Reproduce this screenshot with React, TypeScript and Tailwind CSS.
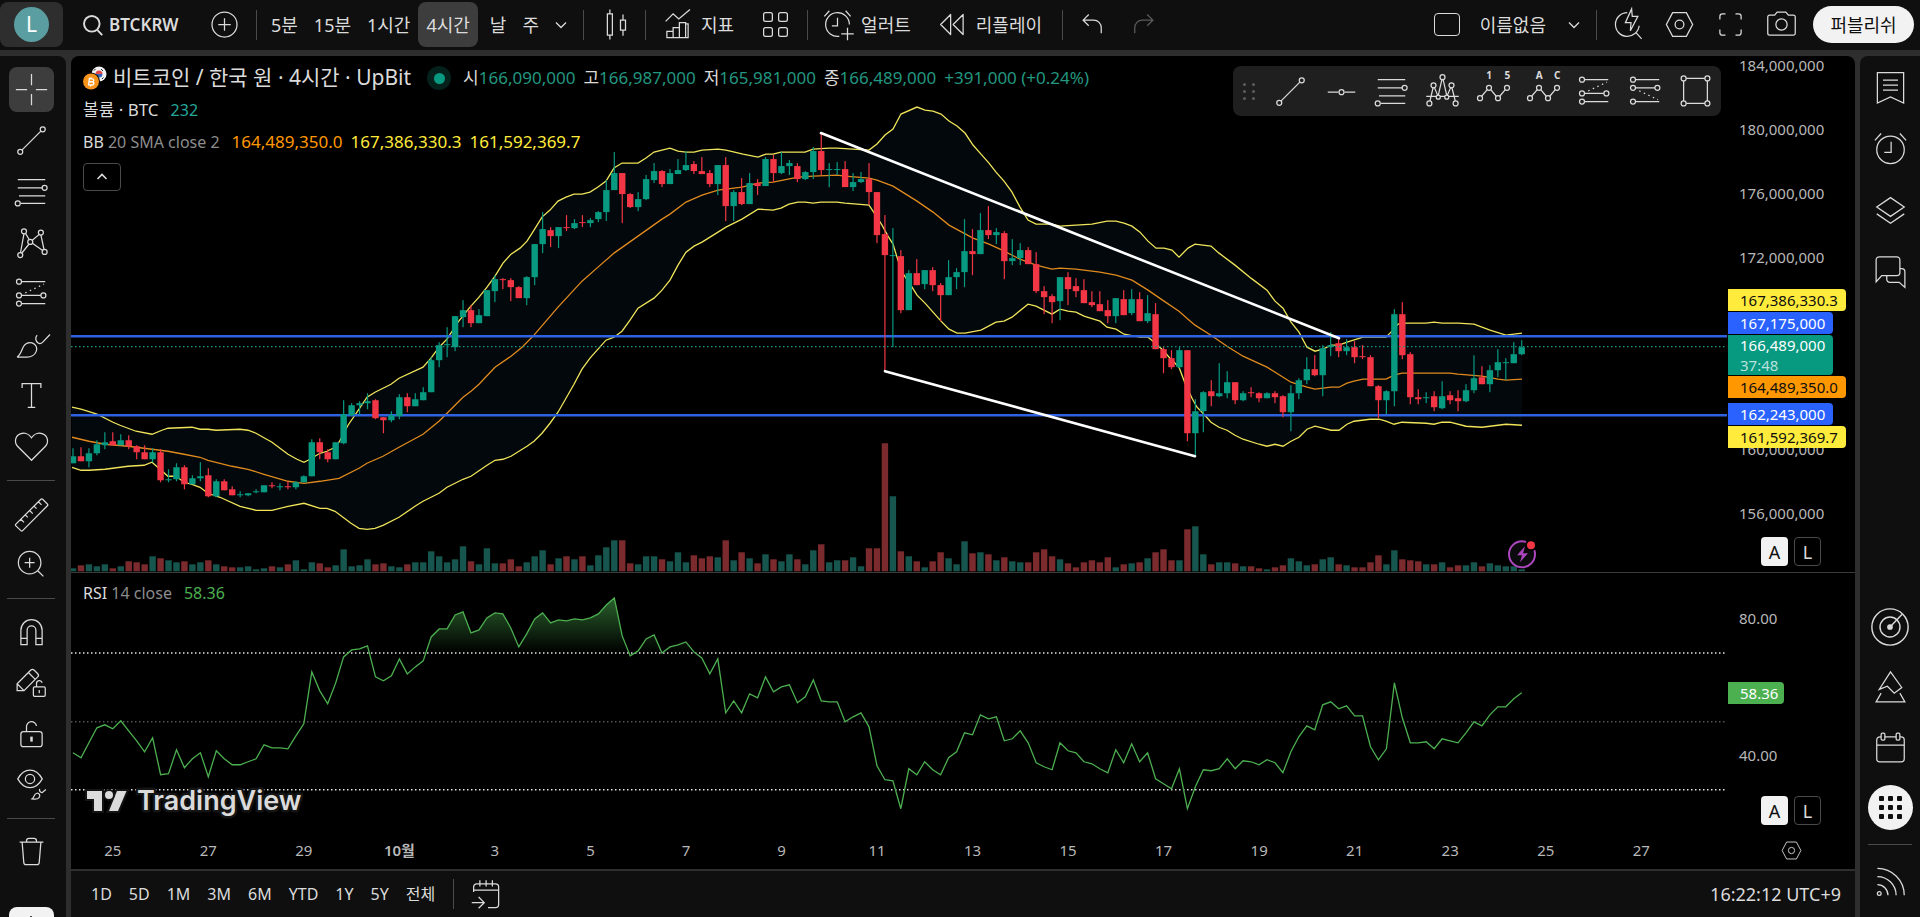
import type { ReactNode } from "react";

const STEP = 7.96;
const FIRST_X = 2;
const PLOT_W = 1656;
const PRICE_H = 516;
const RSI_H = 258;

// open, high, low, close, volume - plot units, y grows downwards
const CANDLES: number[][] = [
  [407, 392, 407, 400, 3], [400, 391, 405, 405, 6], [405, 392, 411, 397, 7], [397, 384, 399, 388, 5],
  [389, 376, 393, 386, 7], [385, 376, 389, 389, 3], [389, 378, 389, 384, 5], [384, 379, 393, 390, 10],
  [390, 389, 403, 396, 9], [396, 389, 403, 403, 7], [403, 392, 406, 396, 15], [396, 393, 426, 424, 13],
  [424, 413, 426, 423, 11], [423, 407, 425, 411, 9], [411, 409, 433, 428, 10], [428, 419, 428, 422, 7],
  [422, 406, 425, 420, 9], [419, 412, 441, 440, 11], [440, 423, 441, 425, 7], [425, 423, 434, 434, 5],
  [433, 430, 439, 439, 4], [439, 435, 441, 438, 4], [439, 437, 440, 437, 5], [436, 433, 437, 435, 2],
  [436, 429, 436, 429, 3], [429, 426, 432, 430, 5], [431, 427, 434, 430, 4], [430, 425, 433, 431, 7],
  [431, 425, 433, 426, 11], [426, 419, 426, 420, 2], [420, 383, 420, 386, 9], [386, 382, 403, 396, 8],
  [396, 393, 406, 403, 4], [403, 386, 403, 386, 6], [387, 344, 388, 358, 22], [359, 347, 360, 349, 5],
  [349, 345, 359, 347, 6], [347, 337, 353, 345, 12], [344, 343, 363, 362, 7], [361, 361, 377, 364, 8],
  [364, 355, 366, 359, 5], [360, 338, 363, 341, 4], [341, 337, 356, 350, 7], [350, 337, 350, 343, 9],
  [344, 331, 344, 336, 9], [336, 301, 336, 304, 20], [304, 286, 311, 289, 15], [289, 271, 301, 288, 9],
  [291, 260, 295, 260, 12], [261, 244, 271, 254, 25], [254, 249, 271, 267, 10], [267, 253, 267, 259, 7],
  [260, 234, 260, 234, 23], [235, 219, 246, 223, 8], [223, 222, 233, 224, 8], [224, 222, 245, 231, 12],
  [231, 230, 242, 242, 5], [242, 220, 249, 221, 9], [221, 188, 229, 188, 15], [188, 156, 197, 173, 21],
  [174, 171, 191, 180, 7], [180, 171, 192, 171, 13], [171, 159, 175, 172, 15], [172, 163, 173, 167, 12],
  [166, 159, 171, 167, 15], [167, 162, 171, 164, 6], [163, 155, 166, 156, 16], [156, 124, 165, 134, 24],
  [134, 96, 134, 117, 31], [117, 117, 167, 138, 31], [138, 137, 152, 151, 8], [151, 136, 155, 143, 7],
  [143, 119, 144, 123, 15], [124, 107, 127, 115, 15], [115, 114, 131, 128, 12], [128, 113, 128, 117, 10],
  [118, 103, 118, 114, 19], [114, 95, 115, 109, 9], [108, 105, 118, 115, 16], [115, 101, 118, 118, 13],
  [117, 114, 131, 128, 15], [128, 109, 139, 109, 14], [109, 101, 165, 150, 31], [150, 134, 165, 136, 11],
  [136, 122, 149, 148, 19], [148, 117, 148, 127, 13], [127, 123, 139, 130, 8], [130, 101, 130, 103, 17],
  [103, 99, 126, 117, 12], [117, 96, 118, 110, 10], [110, 104, 119, 107, 17], [110, 107, 126, 123, 12],
  [123, 115, 124, 116, 7], [116, 91, 123, 95, 21], [95, 77, 119, 114, 27], [114, 107, 131, 113, 9],
  [114, 106, 119, 113, 11], [113, 105, 131, 131, 11], [131, 117, 135, 126, 14], [126, 116, 127, 123, 5],
  [123, 107, 149, 136, 23], [136, 136, 187, 179, 23], [178, 159, 315, 199, 128], [200, 172, 291, 199, 75],
  [200, 194, 257, 254, 20], [254, 214, 254, 217, 15], [217, 203, 229, 229, 10], [228, 214, 233, 214, 4],
  [214, 211, 235, 229, 10], [229, 227, 265, 239, 19], [239, 204, 239, 221, 13], [221, 212, 233, 216, 7],
  [216, 163, 231, 195, 30], [195, 173, 219, 198, 18], [198, 157, 198, 174, 19], [174, 150, 183, 179, 17],
  [179, 172, 188, 176, 11], [177, 175, 223, 205, 14], [205, 183, 209, 202, 10], [202, 187, 209, 194, 9],
  [194, 191, 208, 208, 9], [208, 196, 237, 235, 19], [235, 230, 258, 241, 22], [240, 238, 267, 246, 15],
  [245, 221, 264, 221, 12], [221, 216, 249, 233, 8], [230, 222, 241, 235, 4], [234, 223, 247, 247, 9],
  [246, 235, 251, 249, 11], [248, 235, 255, 255, 9], [254, 244, 267, 260, 14], [260, 242, 267, 242, 4],
  [243, 234, 259, 259, 7], [257, 233, 259, 243, 8], [243, 236, 265, 265, 9], [265, 239, 267, 257, 13],
  [258, 247, 293, 293, 19], [293, 291, 317, 302, 22], [302, 294, 313, 311, 11], [311, 291, 312, 294, 11],
  [294, 294, 385, 377, 42], [377, 343, 400, 355, 45], [355, 335, 376, 336, 17], [335, 324, 350, 340, 7],
  [340, 307, 341, 337, 9], [337, 315, 342, 326, 9], [326, 326, 348, 344, 8], [344, 335, 345, 337, 5],
  [336, 331, 341, 337, 5], [337, 336, 346, 342, 3], [342, 336, 342, 337, 2], [337, 335, 347, 341, 4],
  [340, 339, 361, 356, 6], [356, 329, 375, 337, 13], [337, 322, 343, 324, 10], [324, 301, 328, 313, 6],
  [313, 299, 320, 319, 7], [319, 289, 340, 292, 12], [291, 276, 300, 289, 14], [287, 283, 301, 295, 7],
  [295, 283, 299, 291, 6], [291, 285, 307, 301, 4], [300, 289, 303, 301, 4], [301, 299, 330, 330, 9],
  [330, 329, 362, 344, 16], [344, 334, 358, 335, 7], [335, 253, 350, 258, 21], [258, 246, 303, 299, 12],
  [298, 296, 348, 341, 11], [341, 333, 348, 343, 10], [342, 336, 347, 341, 7], [340, 335, 355, 351, 7],
  [352, 325, 353, 340, 9], [339, 335, 348, 344, 4], [342, 334, 355, 345, 6], [345, 328, 346, 334, 6],
  [334, 299, 337, 322, 9], [321, 310, 328, 328, 5], [328, 309, 336, 314, 8], [314, 293, 321, 306, 6],
  [307, 302, 324, 306, 5], [307, 286, 307, 298, 5], [298, 284, 299, 291, 2],
];

const BB_UPPER =
  "1,351 10,353 26,358 42,366 49,369 65,375 81,378 91,374 97,372 121,371 129,373 137,373 145,374 169,373 177,374 185,377 201,386 217,398 226,403 233,406 237,404 249,397 256,395 264,391 268,386 277,369 288,353 296,341 304,336 320,328 328,322 352,311 360,302 368,291 376,283 387,266 399,251 408,241 416,231 424,220 432,207 440,198 449,192 456,185 463,174 471,161 479,154 487,145 495,141 503,138 511,138 519,136 527,131 535,125 543,112 551,107 567,107 575,102 583,96 591,94 599,92 607,95 615,96 623,96 631,94 647,93 655,94 672,98 687,101 695,98 702,98 710,96 718,96 734,96 742,93 758,92 766,92 782,93 798,94 806,88 814,79 822,73 830,58 846,51 854,54 862,55 870,58 878,65 886,70 894,77 902,89 910,98 918,107 925,116 933,125 941,136 949,151 957,164 965,168 981,168 989,170 1005,169 1021,168 1036,165 1045,165 1053,167 1061,170 1069,176 1077,185 1085,192 1093,192 1101,194 1108,201 1117,192 1124,188 1140,190 1148,197 1164,209 1180,222 1196,234 1204,245 1212,252 1220,266 1228,276 1236,291 1244,295 1252,293 1260,289 1268,289 1276,286 1292,281 1315,281 1322,274 1327,268 1336,267 1355,267 1363,266 1371,267 1387,267 1403,268 1419,274 1435,279 1443,278 1451,277";
const BB_BASIS =
  "1,381 18,385 34,388 57,390 81,393 97,395 113,398 129,401 137,404 161,410 177,413 193,418 217,425 233,427 249,425 268,422 288,412 296,407 312,400 328,391 352,378 368,365 384,349 392,341 400,335 408,328 424,311 440,300 451,291 463,279 487,251 511,225 527,211 543,197 567,180 591,163 599,158 615,146 631,139 647,134 671,131 687,127 702,126 727,121 742,120 766,119 774,120 798,122 806,124 822,130 830,135 846,145 862,156 878,169 902,182 918,188 929,193 949,203 957,206 965,209 981,213 989,212 1005,213 1029,216 1045,219 1061,224 1077,234 1093,245 1108,255 1117,263 1124,269 1140,279 1156,290 1172,300 1196,311 1220,326 1236,331 1244,333 1260,331 1268,331 1276,327 1283,325 1292,323 1315,323 1323,319 1331,317 1379,317 1387,318 1411,320 1427,323 1435,324 1451,323";
const BB_LOWER =
  "1,411 10,414 18,414 34,413 57,410 73,409 81,406 89,413 97,420 105,420 113,426 121,428 129,431 137,437 149,441 169,450 185,454 201,454 217,450 233,447 249,452 256,452 264,455 280,467 288,472 296,473 304,472 312,469 328,461 344,450 352,445 368,437 376,431 392,423 400,420 416,409 424,404 432,403 440,400 456,390 463,385 471,377 479,367 487,356 495,342 503,328 511,313 519,302 527,293 535,284 543,281 551,275 559,264 567,252 583,242 591,234 599,224 607,209 615,196 623,190 631,186 639,181 655,171 671,163 687,153 702,154 710,152 718,148 727,146 734,146 742,147 750,146 766,146 774,147 798,149 806,161 811,169 817,180 822,188 826,201 829,211 833,219 841,231 846,239 854,247 862,256 870,265 878,273 886,277 894,277 910,274 925,266 933,265 941,261 957,248 965,250 981,258 989,253 997,255 1005,256 1013,260 1029,265 1036,271 1045,273 1053,278 1069,281 1077,281 1082,285 1091,293 1099,302 1108,311 1114,327 1121,342 1126,351 1132,357 1140,366 1148,371 1156,374 1164,379 1172,383 1188,388 1196,390 1204,388 1212,390 1220,385 1228,381 1236,373 1244,370 1252,372 1260,374 1268,374 1276,368 1283,365 1299,363 1308,363 1315,365 1323,368 1331,366 1355,367 1363,368 1371,366 1379,366 1395,370 1411,371 1435,368 1451,369";

const RSI = [
  180, 185, 170, 155, 152, 156, 148, 158, 168, 179, 165, 202, 201, 177, 195, 186, 180, 204, 178, 186, 192, 192, 189, 186,
  172, 175, 175, 176, 163, 151, 99, 118, 131, 110, 84, 77, 76, 73, 104, 108, 103, 86, 101, 94, 88, 64, 56, 56, 42, 39, 60,
  57, 45, 40, 41, 55, 74, 61, 46, 40, 50, 47, 48, 46, 47, 45, 41, 32, 25, 63, 83, 78, 66, 62, 80, 74, 72, 69, 79, 85, 101,
  86, 140, 128, 140, 121, 125, 104, 119, 114, 112, 130, 124, 107, 128, 129, 129, 149, 144, 140, 154, 193, 207, 208, 236,
  196, 202, 189, 197, 202, 185, 179, 160, 162, 142, 146, 144, 168, 166, 158, 170, 190, 194, 197, 170, 178, 180, 189, 191,
  196, 200, 177, 190, 171, 189, 180, 206, 211, 216, 196, 236, 214, 197, 198, 196, 186, 196, 188, 189, 192, 187, 190, 200,
  179, 164, 153, 157, 132, 129, 136, 133, 143, 143, 174, 187, 176, 110, 145, 170, 170, 169, 176, 166, 168, 170, 160, 149,
  153, 142, 134, 134, 126, 120,
];

const xAt = (i: number) => FIRST_X + i * STEP;
const rsiPoints = RSI.map((y, i) => `${xAt(i).toFixed(1)},${y}`).join(" ");
const bandPoints = `${BB_UPPER} ${BB_LOWER.split(" ").reverse().join(" ")}`;

function Icon({ children, className = "size-[35px]", box = 28 }: { children: ReactNode; className?: string; box?: number }) {
  return (
    <svg viewBox={`0 0 ${box} ${box}`} className={`${className} shrink-0 overflow-visible`} fill="none" stroke="currentColor" aria-hidden="true">
      {children}
    </svg>
  );
}

/* ---------- icons ---------- */

const CrosshairIcon = () => (
  <Icon><path d="M14 1.500v9M14 17.500v9M1.500 14h9M17.500 14h9" /></Icon>
);
const TrendIcon = () => (
  <Icon>
    <path d="M6.500 21.500 21.500 6.500" />
    <circle cx="5" cy="23" r="2" />
    <circle cx="23" cy="5" r="2" />
  </Icon>
);
const HLineIcon = () => (
  <Icon>
    <path d="M3 14.500h8.500M16.500 14.500H25" />
    <circle cx="14" cy="14.500" r="2" />
  </Icon>
);
const FibIcon = () => (
  <Icon>
    <path d="M3 4.500h22M3 11h20M4 17.500h21M5.500 23.500H25" />
    <circle cx="24.500" cy="11" r="2" />
    <circle cx="3" cy="23.500" r="2" />
  </Icon>
);
const PatternIcon = () => (
  <Icon>
    <path d="M5.200 22.200 8 6.900M9.200 6.700l3.200 5.300M6.200 22.600l6-7.600M14.400 12.400l5.800-4.900M14.700 14.600l8.500 6M21.500 7.900l2.500 11.700" />
    <circle cx="8" cy="5" r="2" />
    <circle cx="21.500" cy="6" r="2" />
    <circle cx="13" cy="13.500" r="2" />
    <circle cx="5" cy="24" r="2" />
    <circle cx="24.500" cy="21.500" r="2" />
  </Icon>
);
const ProjectionIcon = () => (
  <Icon>
    <path d="M6 4.500h19M6 15.500h15.500M6 22h19" />
    <path d="M9 13.500 24 6.500" strokeDasharray="1.200 2.800" />
    <circle cx="4" cy="4.500" r="2" />
    <circle cx="4" cy="15.500" r="2" />
    <circle cx="23.500" cy="15.500" r="2" />
    <circle cx="4" cy="22" r="2" />
  </Icon>
);
const ProjectionDownIcon = () => (
  <Icon>
    <path d="M6 4.500h19M6 11h15.500M6 22h19" />
    <path d="M9 13.500 24 20.500" strokeDasharray="1.200 2.800" />
    <circle cx="4" cy="4.500" r="2" />
    <circle cx="4" cy="11" r="2" />
    <circle cx="23.500" cy="11" r="2" />
    <circle cx="4" cy="22" r="2" />
  </Icon>
);
const HeadShouldersIcon = () => (
  <Icon>
    <path d="M4 21.500 6.500 10.800M7.500 10.700l2.700 6.600M10.700 16.700 13.500 4.500M14.500 4.500l2.800 12.200M17.800 17.200l2.800-6.500M21.500 10.800 24.200 21.500M1 17.800h8.500M12 17.800h4M18.500 17.800H27" />
    <circle cx="3.500" cy="23.500" r="2" />
    <circle cx="6.800" cy="9" r="2" />
    <circle cx="14" cy="2.500" r="2" />
    <circle cx="21.200" cy="9" r="2" />
    <circle cx="24.500" cy="23.500" r="2" />
    <circle cx="10.600" cy="18.500" r="1.600" />
    <circle cx="17.400" cy="18.500" r="1.600" />
  </Icon>
);
const WaveIcon = ({ from, to }: { from: string; to: string }) => (
  <Icon>
    <path d="M4.500 17.800 9 12.500M11.800 12.500l4.400 5.300M19 17.800l4.400-5.300" />
    <circle cx="3.200" cy="19.300" r="2" />
    <circle cx="10.400" cy="11" r="2" />
    <circle cx="17.600" cy="19.300" r="2" />
    <circle cx="24.800" cy="11" r="2" />
    <g fill="currentColor" stroke="none" fontSize="8" fontWeight="700" textAnchor="middle">
      <text x="10.500" y="4">{from}</text>
      <text x="25" y="4">{to}</text>
    </g>
  </Icon>
);
const RectIcon = () => (
  <Icon>
    <path d="M6.500 3.500h15M6.500 23.500h15M4.500 5.500v16M23.500 5.500v16" />
    <circle cx="4.500" cy="3.500" r="2" />
    <circle cx="23.500" cy="3.500" r="2" />
    <circle cx="4.500" cy="23.500" r="2" />
    <circle cx="23.500" cy="23.500" r="2" />
  </Icon>
);
const BrushIcon = () => (
  <Icon>
    <path d="M2.500 24c3-1.500 3.500-6 5.500-9 1.500-2.200 4-3 6.500-2.300 3 1 4.500 4 3.200 7-1.200 2.800-4 4.300-7.200 4.300z" />
    <path d="M18.500 6.500c-1.800 2-1.300 5 .8 6.300 1.200.8 2.500.5 3.500-.5l6-6.300" />
  </Icon>
);
const TextIcon = () => (
  <Icon><path d="M6.500 8V4.500h15V8M14 4.500v19M11 23.500h6" /></Icon>
);
const HeartIcon = () => (
  <Icon>
    <path d="M14 25 3 14C-.2 10.700 1 5.500 5 3.900 8.500 2.500 12 4 14 7c2-3 5.500-4.500 9-3.100 4 1.600 5.200 6.800 2 10.100z" />
  </Icon>
);
const RulerIcon = () => (
  <Icon>
    <path d="M1.500 22.500 21.500 2.600a1 1 0 0 1 1.400 0l3.800 3.800a1 1 0 0 1 0 1.400L6.900 27.700a1 1 0 0 1-1.400 0l-4-3.800a1 1 0 0 1 0-1.400zM5.500 18.600l2.500 2.500M9 15.100l2 2M12.500 11.600l2.500 2.500M16 8.100l2 2M19.500 4.600l2.500 2.500" />
  </Icon>
);
const ZoomInIcon = () => (
  <Icon><path d="M12.500 3.500a9 9 0 1 0 0 18 9 9 0 0 0 0-18zM12.500 8.500v8M8.500 12.500h8M19 19l4.500 4.500" /></Icon>
);
const MagnetIcon = () => (
  <Icon>
    <path d="M5.500 24.500V13a8.500 8.500 0 0 1 17 0v11.500h-5V13a3.500 3.500 0 0 0-7 0v11.500zM5.500 19.500h5M17.500 19.500h5" />
  </Icon>
);
const PencilLockIcon = () => (
  <Icon>
    <path d="M13.500 4 2.500 15v5.500H8l11-11c.8-.8.8-1.700 0-2.500L16 4c-.8-.8-1.700-.8-2.500 0zM11.500 6l5.500 5.500M2.500 15 8 20.500" />
    <rect x="15.500" y="17.500" width="9.500" height="7.500" rx="1" />
    <path d="M18 17.500v-2.500a2.300 2.300 0 0 1 4.500-.8M20.200 20v2.500" />
  </Icon>
);
const LockIcon = () => (
  <Icon>
    <rect x="5.500" y="12.500" width="17" height="12" rx="2" />
    <path d="M10 12.500V9a4 4 0 0 1 8-1" />
    <path d="M14 16.500v4" strokeWidth="2" />
  </Icon>
);
const EyeIcon = () => (
  <Icon>
    <path d="M3 9.500C5.500 5 9 2.500 12.800 2.500s7.300 2.500 9.800 7c-2.500 4.500-6 7-9.800 7s-7.300-2.500-9.800-7z" />
    <circle cx="12.800" cy="9.500" r="3.700" />
    <path d="M14.500 25.500c1.500-1 1.500-4 3.800-4.500 2-.2 3 2 1.800 3.500-1 1.200-2.800 1.500-5.600 1zM20.500 17.500c-.5 1.500.5 3 2 3l3-2.500" />
  </Icon>
);
const TrashIcon = () => (
  <Icon>
    <path d="M4.500 6.500h19M10 6.500v-1a2 2 0 0 1 2-2h4a2 2 0 0 1 2 2v1M6.500 6.500l1.300 16a2 2 0 0 0 2 2h8.400a2 2 0 0 0 2-2l1.300-16" />
  </Icon>
);
const SearchIcon = () => (
  <Icon className="size-6" box={20}><g strokeWidth="1.600"><circle cx="9" cy="9" r="6.500" /><path d="m13.700 14.200 4 4.300" /></g></Icon>
);
const PlusCircleIcon = () => (
  <Icon><circle cx="14" cy="14" r="10" /><path d="M14 9v10M9 14h10" /></Icon>
);
const ChevronIcon = () => (
  <Icon className="size-4" box={16}><path d="m3 5.500 5 5 5-5" strokeWidth="1.300" /></Icon>
);
const CandlesIcon = () => (
  <Icon><path d="M7.500 5.500h4v17h-4zM9.500 2v3.500M9.500 22.500V26M18 10.500h4v8h-4zM20 6v4.500M20 18.500V23" /></Icon>
);
const IndicatorsIcon = () => (
  <Icon>
    <path d="m4.500 11.500 6-6 4.500 4L24 2M5.500 24.500v-5h5v5M10.500 24.500v-8h5v8M15.500 18.500v-2M15.500 24.500v-12h5v12M5 24.500h17.500v-11h-2" />
  </Icon>
);
const LayoutIcon = () => (
  <Icon>
    <rect x="4.500" y="4.500" width="7" height="7" rx="1.500" />
    <rect x="16.500" y="4.500" width="7" height="7" rx="1.500" />
    <rect x="4.500" y="16.500" width="7" height="7" rx="1.500" />
    <rect x="16.500" y="16.500" width="7" height="7" rx="1.500" />
  </Icon>
);
const AlertAddIcon = () => (
  <Icon>
    <path d="M23.500 14a9.500 9.500 0 1 0-8 9.400M14 8.500v6.500h-4.500M3.500 7.500l4-4.500M20.500 3l4 4.500M22 16.500v10M17 21.500h10" />
  </Icon>
);
const RewindIcon = () => (
  <Icon><path d="M12.500 6v16l-8-8zM22.500 6v16l-8-8z" strokeLinejoin="round" /></Icon>
);
const UndoIcon = () => (
  <Icon><path d="m11 6-4.500 4.500L11 15M6.500 10.500H15a6 6 0 0 1 6 6V21" /></Icon>
);
const RedoIcon = () => (
  <Icon><path d="m17 6 4.500 4.500L17 15M21.500 10.500H13a6 6 0 0 0-6 6V21" /></Icon>
);
const QuickSearchIcon = () => (
  <Icon>
    <path d="M13 4.500A9.500 9.500 0 1 0 22.500 15M20 20.500l4.500 5M16.500 1.500l-5 11h4.500l-.5 6.500 6-11.500H17z" />
  </Icon>
);
const HexIcon = ({ className }: { className?: string }) => (
  <Icon className={className}>
    <path d="m8.500 4.500-5 9.500 5 9.500h11l5-9.500-5-9.500z" />
    <circle cx="14" cy="14" r="3.500" />
  </Icon>
);
const FullscreenIcon = () => (
  <Icon>
    <path d="M10 5.500H7.500a2 2 0 0 0-2 2V10M18 5.500h2.500a2 2 0 0 1 2 2V10M10 22.500H7.500a2 2 0 0 1-2-2V18M18 22.500h2.500a2 2 0 0 0 2-2V18" />
  </Icon>
);
const CameraIcon = () => (
  <Icon>
    <path d="M4.500 6.500h4l2-2.500h7l2 2.500h4a1.500 1.500 0 0 1 1.500 1.500v13a1.500 1.500 0 0 1-1.500 1.500h-19A1.500 1.500 0 0 1 3 21V8a1.500 1.500 0 0 1 1.500-1.500z" />
    <circle cx="14" cy="14" r="4.500" />
  </Icon>
);
const WatchlistIcon = () => (
  <Icon><path d="M3.500 2h21v24.500L14 21.500 3.500 26.500zM8 8h12M8 12h12M8 16h12" /></Icon>
);
const AlarmIcon = () => (
  <Icon><circle cx="14" cy="15" r="11" /><path d="M14.500 8.500v8.500H9M1.500 7.500 6.500 2M21.500 2l5 5.500" /></Icon>
);
const LayersIcon = () => (
  <Icon><path d="M14 4.500 25 12l-11 7.500L3 12zM3 17.500 14 25l11-7.500" /></Icon>
);
const ChatIcon = () => (
  <Icon>
    <path d="M5 3h14A2.500 2.500 0 0 1 21.500 5.500v10a2.500 2.500 0 0 1-2.500 2.500H7L2.500 23V5.500A2.500 2.500 0 0 1 5 3z" />
    <path d="M21.500 12.500H23a2.500 2.500 0 0 1 2.500 2.500v12.500l-4.500-4h-7.500a2.500 2.500 0 0 1-2.500-2.500v-3" />
  </Icon>
);
const RadarIcon = () => (
  <Icon className="size-[40px]">
    <circle cx="14" cy="14" r="12.700" />
    <circle cx="14" cy="14" r="7" />
    <circle cx="14" cy="14" r="1.500" fill="currentColor" />
    <path d="m14 14 8.500-9" />
  </Icon>
);
const PineIcon = () => (
  <Icon>
    <path d="M14 1.500 5 15.500l6.500-2.500 5.500 5.500 6-4.500zM6.500 18.500 2.500 25.500h23l-4-7" />
  </Icon>
);
const CalendarIcon = () => (
  <Icon>
    <path d="M6.500 5.500h-1a2.500 2.500 0 0 0-2.500 2.500v15A2.500 2.500 0 0 0 5.500 25.500h17A2.500 2.500 0 0 0 25 23V8a2.500 2.500 0 0 0-2.500-2.500h-1M9.500 5.500h9M3 12h22" />
    <rect x="6.500" y="2.500" width="3" height="5.500" rx="1" />
    <rect x="18.500" y="2.500" width="3" height="5.500" rx="1" />
  </Icon>
);
const FeedIcon = () => (
  <Icon>
    <circle cx="5" cy="23.500" r="1.500" />
    <path d="M3.500 16.500a8.500 8.500 0 0 1 8.500 8.500M3.500 10a15 15 0 0 1 15 15M3.500 3.500A21.500 21.500 0 0 1 25 25" />
  </Icon>
);
const GoToDateIcon = () => (
  <Icon>
    <path d="M4.500 12V8A2.500 2.500 0 0 1 7 5.500h15A2.500 2.500 0 0 1 24.500 8v14a2.500 2.500 0 0 1-2.500 2.500h-6M4.500 10.500h20M9.500 2.500v5M14.500 2.500v5M19.500 2.500v5M3 20.500h9.500M8.500 16l4.500 4.500L8.500 25" />
  </Icon>
);

/* ---------- building blocks ---------- */

function ToolButton({ label, active, children }: { label: string; active?: boolean; children: ReactNode }) {
  return (
    <button type="button" aria-label={label} className="flex h-[51px] w-full shrink-0 items-center justify-center">
      <span className={`flex h-[45px] w-[45px] items-center justify-center rounded-lg ${active ? "bg-[#3d3d3d]" : ""}`}>{children}</span>
    </button>
  );
}

function ToolDivider() {
  return (
    <div className="flex h-4 shrink-0 items-center justify-center">
      <div className="h-px w-12 bg-[#4a4a4a]" />
    </div>
  );
}

function BarDivider({ className = "" }: { className?: string }) {
  return <div className={`h-[30px] w-px shrink-0 bg-[#4a4a4a] ${className}`} />;
}

function IntervalButton({ label, active, className = "" }: { label: string; active?: boolean; className?: string }) {
  return (
    <button type="button" className={`h-[45px] rounded-lg px-2 text-lg ${active ? "bg-[#3d3d3d]" : ""} ${className}`}>
      {label}
    </button>
  );
}

function Header() {
  return (
    <header className="flex h-[50px] shrink-0 items-center bg-[#0f0f0f] pb-px pr-1.5">
      <button type="button" aria-label="메뉴" className="flex h-[45px] w-[63px] items-center justify-center rounded-lg bg-[#2e2e2e]">
        <span className="flex size-[35px] items-center justify-center rounded-full bg-[#5b9ea1] text-[21px] text-white">L</span>
      </button>
      <button type="button" className="ml-[18px] flex w-[110px] items-center gap-1 text-[17px] font-semibold">
        <SearchIcon />
        BTCKRW
      </button>
      <button type="button" aria-label="심볼 비교" className="ml-4"><PlusCircleIcon /></button>
      <BarDivider className="ml-3.5 mr-1.5" />
      <IntervalButton label="5분" />
      <IntervalButton label="15분" />
      <IntervalButton label="1시간" />
      <IntervalButton label="4시간" active />
      <IntervalButton label="날" className="ml-1" />
      <IntervalButton label="주" />
      <button type="button" aria-label="차트 간격" className="ml-1.5"><ChevronIcon /></button>
      <BarDivider className="ml-3.5" />
      <button type="button" aria-label="캔들" className="ml-3.5"><CandlesIcon /></button>
      <BarDivider className="ml-3" />
      <button type="button" className="ml-3.5 flex items-center gap-1.5 text-lg"><IndicatorsIcon />지표</button>
      <button type="button" aria-label="레이아웃 템플릿" className="ml-6"><LayoutIcon /></button>
      <BarDivider className="ml-3.5" />
      <button type="button" className="ml-3 flex items-center gap-1.5 text-lg"><AlertAddIcon />얼러트</button>
      <button type="button" className="ml-6 flex items-center gap-1.5 text-lg"><RewindIcon />리플레이</button>
      <BarDivider className="ml-5" />
      <button type="button" aria-label="되돌리기" className="ml-3"><UndoIcon /></button>
      <button type="button" aria-label="다시 실행" className="ml-4 text-[#5c5c5c]"><RedoIcon /></button>

      <div className="ml-auto flex items-center">
        <button type="button" className="flex items-center gap-5 text-lg">
          <span className="h-[23px] w-[26px] rounded border border-[#dbdbdb]" />
          이름없음
          <ChevronIcon />
        </button>
        <BarDivider className="ml-3.5" />
        <div className="ml-3.5 flex items-center gap-4">
          <button type="button" aria-label="빠른 검색"><QuickSearchIcon /></button>
          <button type="button" aria-label="설정"><HexIcon /></button>
          <button type="button" aria-label="전체화면"><FullscreenIcon /></button>
          <button type="button" aria-label="스냅샷"><CameraIcon /></button>
        </div>
        <button type="button" className="ml-3.5 h-[37px] w-[101px] rounded-full bg-[#f2f2f2] text-lg leading-none text-[#0f0f0f]">퍼블리쉬</button>
      </div>
    </header>
  );
}

function DrawingToolbar() {
  return (
    <aside className="flex w-[66px] shrink-0 flex-col overflow-hidden rounded-tr-lg bg-[#0f0f0f] pr-1 pt-2">
      <ToolButton label="크로스" active><CrosshairIcon /></ToolButton>
      <ToolButton label="추세선"><TrendIcon /></ToolButton>
      <ToolButton label="피보나치"><FibIcon /></ToolButton>
      <ToolButton label="패턴"><PatternIcon /></ToolButton>
      <ToolButton label="예측"><ProjectionIcon /></ToolButton>
      <ToolButton label="브러쉬"><BrushIcon /></ToolButton>
      <ToolButton label="텍스트"><TextIcon /></ToolButton>
      <ToolButton label="아이콘"><HeartIcon /></ToolButton>
      <ToolDivider />
      <ToolButton label="측정"><RulerIcon /></ToolButton>
      <ToolButton label="확대"><ZoomInIcon /></ToolButton>
      <ToolDivider />
      <ToolButton label="자석"><MagnetIcon /></ToolButton>
      <ToolButton label="그리기 모드 유지"><PencilLockIcon /></ToolButton>
      <ToolButton label="드로잉 잠금"><LockIcon /></ToolButton>
      <ToolButton label="드로잉 숨기기"><EyeIcon /></ToolButton>
      <ToolDivider />
      <ToolButton label="삭제"><TrashIcon /></ToolButton>
      <button type="button" aria-label="추가" className="mx-auto mt-[30px] flex h-[45px] w-[45px] shrink-0 items-start justify-center rounded-lg bg-[#f2f2f2] pt-2 text-[#0f0f0f]">
        <Icon className="size-5" box={20}><path d="M10 1v18M1 10h18" strokeWidth="1.500" /></Icon>
      </button>
    </aside>
  );
}

function SideButton({ label, tall, children }: { label: string; tall?: boolean; children: ReactNode }) {
  return (
    <button type="button" aria-label={label} className={`flex w-full items-center justify-center ${tall ? "h-[61px]" : "h-[60px]"}`}>
      {children}
    </button>
  );
}

function WidgetBar() {
  return (
    <aside className="flex w-[60px] shrink-0 flex-col rounded-tl-lg bg-[#0f0f0f] pb-1.5 pt-px">
      <SideButton label="왓치리스트" tall><WatchlistIcon /></SideButton>
      <SideButton label="얼러트" tall><AlarmIcon /></SideButton>
      <SideButton label="오브젝트 트리" tall><LayersIcon /></SideButton>
      <SideButton label="채팅" tall><ChatIcon /></SideButton>
      <div className="mt-auto">
        <SideButton label="스크리너"><RadarIcon /></SideButton>
        <SideButton label="파인 에디터"><PineIcon /></SideButton>
        <SideButton label="캘린더"><CalendarIcon /></SideButton>
        <SideButton label="프로덕트">
          <span className="flex size-[45px] items-center justify-center rounded-full bg-[#f2f2f2]">
            <span className="grid grid-cols-3 gap-1">
              {Array.from({ length: 9 }, (_, i) => (
                <span key={i} className="size-[5px] rounded-[1px] bg-[#0f0f0f]" />
              ))}
            </span>
          </span>
        </SideButton>
        <div className="flex h-3.5 items-center justify-center">
          <div className="h-px w-11 bg-[#4a4a4a]" />
        </div>
        <SideButton label="피드"><FeedIcon /></SideButton>
      </div>
    </aside>
  );
}

function FavoritesBar() {
  return (
    <div className="absolute right-1.5 top-2.5 flex h-[50px] w-[488px] items-center rounded-lg bg-[#1f1f1f]">
      <div className="flex w-8 justify-center">
        <div className="grid grid-cols-2 gap-x-1.5 gap-y-1">
          {Array.from({ length: 6 }, (_, i) => (
            <span key={i} className="size-[3px] rounded-full bg-[#5c5c5c]" />
          ))}
        </div>
      </div>
      {[
        { label: "추세선", icon: <TrendIcon /> },
        { label: "가로줄", icon: <HLineIcon /> },
        { label: "되돌림", icon: <FibIcon /> },
        { label: "헤드앤숄더", icon: <HeadShouldersIcon /> },
        { label: "임펄스", icon: <WaveIcon from="1" to="5" /> },
        { label: "코렉션", icon: <WaveIcon from="A" to="C" /> },
        { label: "롱 포지션", icon: <ProjectionIcon /> },
        { label: "숏 포지션", icon: <ProjectionDownIcon /> },
        { label: "직사각형", icon: <RectIcon /> },
      ].map(({ label, icon }) => (
        <button key={label} type="button" aria-label={label} className="flex flex-1 justify-center">{icon}</button>
      ))}
    </div>
  );
}

function Ohlc({ label, value }: { label: string; value: string }) {
  return (
    <span className="text-[17px]">
      {label}
      <span className="text-[#22967f]">{value}</span>
    </span>
  );
}

function Legend() {
  return (
    <div className="absolute left-3 top-1.5">
      <div className="flex h-8 items-center gap-2 whitespace-nowrap">
        <div className="mr-2 flex items-center gap-1.5">
          <svg viewBox="0 0 24 24" className="size-6" aria-hidden="true">
            <circle cx="16" cy="8" r="7.500" fill="#f2f2f2" />
            <path d="M12.500 8a3.500 3.500 0 0 1 7 0z" fill="#e04a4a" />
            <path d="M12.500 8a3.500 3.500 0 0 0 7 0z" fill="#3465b8" />
            <path d="m18 3 2 2M20.500 11.500 19 13M11 4.500 12.500 3" stroke="#222" />
            <circle cx="8" cy="15.500" r="9" fill="#000" />
            <circle cx="8" cy="15.500" r="8" fill="#f7931a" />
            <path d="M6.500 11.500 5.500 19.500M6 12.500l3.200.4c2.200.4 1.900 3-.3 2.900l-2.700-.3 3 .3c2.500.4 2.100 3.500-.6 3.200l-3.300-.4M8.300 11.400l-.2 1.300M7.500 19l-.2 1.400" fill="none" stroke="#fff" strokeWidth="1.300" />
          </svg>
          <h1 className="text-[21px]">비트코인 / 한국 원 · 4시간 · UpBit</h1>
        </div>
        <span className="mr-1 flex size-6 items-center justify-center rounded-full bg-[#04211c]">
          <span className="size-[11px] rounded-full bg-[#089981]" />
        </span>
        <Ohlc label="시" value="166,090,000" />
        <Ohlc label="고" value="166,987,000" />
        <Ohlc label="저" value="165,981,000" />
        <Ohlc label="종" value="166,489,000" />
        <span className="text-[17px] text-[#22967f]">+391,000 (+0.24%)</span>
      </div>
      <div className="flex h-8 items-center gap-3 text-base">
        <span className="text-[17px]">볼륨 · BTC</span>
        <span className="text-[#26a69a]">232</span>
      </div>
      <div className="flex h-8 items-center gap-2 text-[17px]">
        <span className="mr-1 text-base">BB <span className="text-[#8c8c8c]">20 SMA close 2</span></span>
        <span className="text-[#ff9800]">164,489,350.0</span>
        <span className="text-[#ffeb3b]">167,386,330.3</span>
        <span className="text-[#ffeb3b]">161,592,369.7</span>
      </div>
      <button type="button" aria-label="지표 접기" className="mt-[5px] flex h-7 w-[38px] items-center justify-center rounded border border-[#4a4a4a]">
        <Icon className="size-4" box={16}><path d="m3.500 10 4.500-4.500 4.500 4.500" strokeWidth="1.600" /></Icon>
      </button>
    </div>
  );
}

function PricePlot() {
  return (
    <svg viewBox={`0 0 ${PLOT_W} ${PRICE_H}`} preserveAspectRatio="none" className="absolute inset-0 size-full" role="img" aria-label="BTCKRW 4시간 차트">
      <polygon points={bandPoints} fill="#2196f3" fillOpacity="0.05" />
      {CANDLES.map(([open, , , close, volume], i) => (
        <rect key={i} x={xAt(i) - 3.2} y={515 - volume} width="6.400" height={volume} fill={close > open ? "#7b2b2d" : "#17564e"} />
      ))}
      <g fill="none" strokeWidth="1.300">
        <polyline points={BB_UPPER} stroke="#efe45a" />
        <polyline points={BB_LOWER} stroke="#efe45a" />
        <polyline points={BB_BASIS} stroke="#e08a1e" />
      </g>
      <g stroke="#2f62e0" strokeWidth="2.500">
        <line x1="0" x2={PLOT_W} y1="280" y2="280" />
        <line x1="0" x2={PLOT_W} y1="359" y2="359" />
      </g>
      {CANDLES.map(([open, high, low, close], i) => {
        const color = close > open ? "#f23645" : "#089981";
        const x = xAt(i);
        return (
          <g key={i} fill={color}>
            <rect x={x - 0.6} y={high} width="1.200" height={Math.max(low - high, 1)} />
            <rect x={x - 3.2} y={Math.min(open, close)} width="6.400" height={Math.max(Math.abs(close - open), 1)} />
          </g>
        );
      })}
      <line x1="0" x2={PLOT_W} y1="290.500" y2="290.500" stroke="#149a84" strokeWidth="1.300" strokeDasharray="1.500 2.500" />
      <g stroke="#fff" strokeWidth="2.600" strokeLinecap="round">
        <line x1="750" y1="77" x2="1268" y2="282" />
        <line x1="814" y1="315" x2="1124" y2="400" />
      </g>
      <circle cx="1451" cy="498" r="13" fill="#0b0b0d" stroke="#ab47bc" strokeWidth="2" />
      <path d="m1454 490-8 9h5l-2 7 8-9h-5z" fill="#ab47bc" />
      <circle cx="1460" cy="489" r="6" fill="#000" />
      <circle cx="1460" cy="489" r="4" fill="#f23645" />
    </svg>
  );
}

function RsiPlot() {
  return (
    <svg viewBox={`0 0 ${PLOT_W} ${RSI_H}`} preserveAspectRatio="none" className="absolute inset-0 size-full" role="img" aria-label="RSI 14">
      <defs>
        <linearGradient id="overbought" x1="0" x2="0" y1="20" y2="80" gradientUnits="userSpaceOnUse">
          <stop offset="0" stopColor="#4caf50" stopOpacity="0.600" />
          <stop offset="1" stopColor="#4caf50" stopOpacity="0" />
        </linearGradient>
        <clipPath id="above-band">
          <rect x="0" y="0" width={PLOT_W} height="80" />
        </clipPath>
      </defs>
      <polygon points={`${xAt(0)},${RSI_H} ${rsiPoints} ${xAt(182)},${RSI_H}`} fill="url(#overbought)" clipPath="url(#above-band)" />
      <g strokeDasharray="1.500 2.500" strokeWidth="1.500">
        <line x1="0" x2={PLOT_W} y1="80" y2="80" stroke="#e6e6e6" />
        <line x1="0" x2={PLOT_W} y1="149" y2="149" stroke="#555" />
        <line x1="0" x2={PLOT_W} y1="217" y2="217" stroke="#e6e6e6" />
      </g>
      <polyline points={rsiPoints} fill="none" stroke="#4caf50" strokeWidth="1.300" />
    </svg>
  );
}

const PRICE_TICKS = ["184,000,000", "180,000,000", "176,000,000", "172,000,000", "", "", "160,000,000", "156,000,000"];

function ScaleModes() {
  return (
    <div className="absolute bottom-1.5 left-[34px] flex gap-1.5 text-lg leading-none">
      <button type="button" aria-label="자동 스케일" className="h-[29px] w-[27px] rounded bg-[#f2f2f2] text-[#0f0f0f]">A</button>
      <button type="button" aria-label="로그 스케일" className="h-[29px] w-[27px] rounded border border-[#4a4a4a]">L</button>
    </div>
  );
}

function PriceAxis() {
  return (
    <div className="relative flex w-32 shrink-0 flex-col overflow-hidden text-[15px] leading-[22px]">
      <div className="-mt-[23px] mb-[27px] flex flex-1 flex-col text-[#b8b8b8]">
        {PRICE_TICKS.map((tick, i) => (
          <div key={i} className="flex flex-1 items-center pl-3">{tick}</div>
        ))}
      </div>
      <div className="absolute left-px top-[233px] flex flex-col items-start gap-px text-white">
        <span className="rounded-r-sm bg-[#ffeb3b] pl-3 pr-2 text-[#0f0f0f]">167,386,330.3</span>
        <span className="rounded-r-sm bg-[#2962ff] pl-3 pr-2">167,175,000</span>
        <span className="flex flex-col rounded-r-sm bg-[#089981] pl-3 pr-2 leading-5">
          166,489,000
          <span className="leading-5 text-[#b9e0d9]">37:48</span>
        </span>
        <span className="rounded-r-sm bg-[#ff9800] pl-3 pr-2 text-[#0f0f0f]">164,489,350.0</span>
        <span className="mt-1 rounded-r-sm bg-[#2962ff] pl-3 pr-2">162,243,000</span>
        <span className="rounded-r-sm bg-[#ffeb3b] pl-3 pr-2 text-[#0f0f0f]">161,592,369.7</span>
      </div>
      <ScaleModes />
    </div>
  );
}

function RsiAxis() {
  return (
    <div className="relative flex w-32 shrink-0 flex-col overflow-hidden text-[15px] leading-[22px]">
      <div className="-mt-6 mb-2 flex flex-1 flex-col text-[#b8b8b8]">
        <div className="flex flex-1 items-center pl-3">80.00</div>
        <div className="flex flex-1 items-center pl-3">40.00</div>
      </div>
      <span className="absolute left-px top-[109px] rounded-r-sm bg-[#4caf50] pl-3 pr-1.5 text-white">58.36</span>
      <ScaleModes />
    </div>
  );
}

function Watermark() {
  return (
    <a href="#tradingview" aria-label="TradingView" className="absolute bottom-3 left-4 flex items-center gap-2.5 text-[#dbdbdb]">
      <svg viewBox="0 0 40 20" className="h-5 w-10 overflow-visible" fill="currentColor" stroke="#141414" strokeWidth="4" paintOrder="stroke" aria-hidden="true">
        <path d="M0 0h15v20H7V8H0zM30 0h9.500L31 20h-9z" />
        <circle cx="22" cy="4" r="4" />
      </svg>
      <svg viewBox="0 0 164 36" className="h-9 w-[164px] overflow-visible font-['Inter',sans-serif] text-[27px] font-semibold" aria-hidden="true">
        <text x="0" y="27" fill="currentColor" stroke="#141414" strokeWidth="5" strokeLinejoin="round" paintOrder="stroke">TradingView</text>
      </svg>
    </a>
  );
}

const DAYS = ["25", "27", "29", "10월", "3", "5", "7", "9", "11", "13", "15", "17", "19", "21", "23", "25", "27"];
const RANGES = ["1D", "5D", "1M", "3M", "6M", "YTD", "1Y", "5Y", "전체"];

function TimeAxis() {
  return (
    <div className="flex h-[38px] shrink-0 items-center text-[15px] text-[#b8b8b8]">
      <div className="-ml-1.5 mr-[38px] flex flex-1">
        {DAYS.map((day, i) => (
          <span key={i} className={`flex-1 basis-0 text-center ${day.endsWith("월") ? "font-semibold" : ""}`}>{day}</span>
        ))}
      </div>
      <div className="flex w-32 justify-center">
        <button type="button" aria-label="스케일 설정" className="text-[#dbdbdb]"><HexIcon className="size-[25px]" /></button>
      </div>
    </div>
  );
}

function Footer() {
  return (
    <footer className="flex h-12 shrink-0 items-center border-t-2 border-[#2e2e2e] bg-[#0f0f0f] pl-5 pr-3.5 text-base">
      <div className="flex items-center gap-[17px]">
        {RANGES.map((range) => (
          <button key={range} type="button">{range}</button>
        ))}
      </div>
      <BarDivider className="ml-[18px]" />
      <button type="button" aria-label="이동" className="ml-3.5"><GoToDateIcon /></button>
      <button type="button" className="ml-auto text-lg">16:22:12 UTC+9</button>
    </footer>
  );
}

export default function App() {
  return (
    <div className="flex h-screen flex-col gap-1.5 overflow-hidden bg-[#2e2e2e] font-['Noto_Sans','Noto_Sans_CJK_KR',sans-serif] text-[#dbdbdb]">
      <Header />
      <div className="flex min-h-0 flex-1 gap-[5px]">
        <DrawingToolbar />
        <main className="flex min-w-0 flex-1 flex-col overflow-hidden rounded-t-lg bg-black">
          <section className="flex min-h-0 flex-[517] basis-0 border-b border-[#3a3a3a]">
            <div className="relative min-w-0 flex-1">
              <PricePlot />
              <Legend />
              <FavoritesBar />
            </div>
            <PriceAxis />
          </section>
          <section className="flex min-h-0 flex-[258] basis-0">
            <div className="relative min-w-0 flex-1">
              <RsiPlot />
              <div className="absolute left-3 top-2 flex gap-3 text-base">
                <span>RSI <span className="text-[#8c8c8c]">14 close</span></span>
                <span className="text-[#4caf50]">58.36</span>
              </div>
              <Watermark />
            </div>
            <RsiAxis />
          </section>
          <TimeAxis />
          <Footer />
        </main>
        <WidgetBar />
      </div>
    </div>
  );
}
